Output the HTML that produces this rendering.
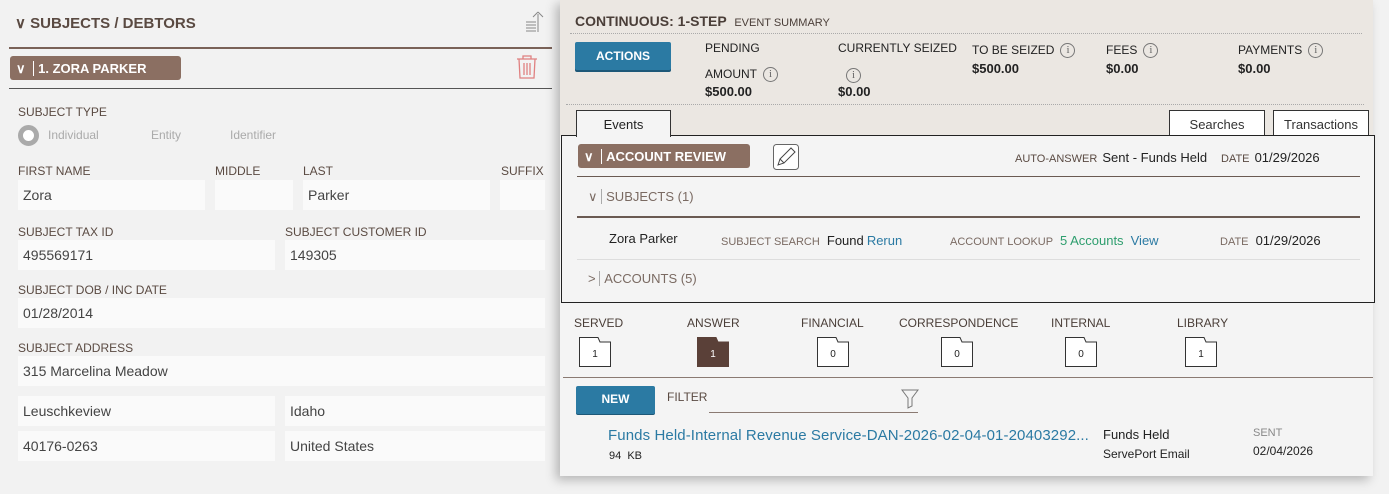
<!DOCTYPE html>
<html><head><meta charset="utf-8"><style>
*{margin:0;padding:0;box-sizing:border-box}
body{width:1389px;height:494px;background:#f2f2f2;font-family:"Liberation Sans Narrow","Liberation Sans",sans-serif;position:relative;overflow:hidden;color:#333}
.a{position:absolute;white-space:nowrap}
.lbl{font-size:12px;color:#5a4a42}
.in{position:absolute;background:#fafafa;height:30px;font-family:"Liberation Sans",sans-serif;font-size:14px;color:#444;padding:7px 5px}
.info{display:inline-block;width:15px;height:15px;border:1px solid #777;border-radius:50%;font-size:11px;text-align:center;line-height:13px;color:#666;vertical-align:middle;margin-left:6px;font-family:"Liberation Serif",serif}
.v{font-weight:bold;font-size:13px;color:#222}
.fold{position:absolute;width:32px;height:30px}
.fold span{position:absolute;left:0;width:32px;top:12px;text-align:center;font-size:10px;color:#222}
</style></head><body>
<!-- LEFT -->
<div class="a" style="left:15px;top:14px;font-size:15px;font-weight:bold;color:#5a4a42">&#8744; SUBJECTS / DEBTORS</div>
<svg class="a" style="left:524px;top:10px" width="24" height="24" viewBox="0 0 24 24"><path d="M2 12h10M2 15h10M2 18h10M2 21h10M14 22V4M14 2l-5 5M14 2l5 5" stroke="#888" fill="none" stroke-width="1"/></svg>
<div class="a" style="left:9px;top:47px;width:543px;height:2px;background:#7a6258"></div>
<div class="a" style="left:10px;top:56px;width:171px;height:24px;background:#8b6f62;border-radius:3px;color:#fff;font-size:13px;font-weight:bold;padding:5px 6px">&#8744; <span style="border-left:1px solid #fff;margin:0 4px"></span> 1. ZORA PARKER</div>
<svg class="a" style="left:515px;top:54px" width="24" height="26" viewBox="0 0 24 26"><path d="M2 5h20M8 5V2h8v3M4 5l1 19h14l1-19M9 9v12M12 9v12M15 9v12" stroke="#e08080" fill="none" stroke-width="1.3"/></svg>
<div class="a" style="left:9px;top:88px;width:543px;height:1px;background:#555"></div>
<div class="a lbl" style="left:18px;top:105px">SUBJECT TYPE</div>
<div class="a" style="left:18px;top:125px;width:21px;height:21px;border-radius:50%;border:5px solid #aaa;background:#fff"></div>
<div class="a" style="left:48px;top:128px;font-size:12px;color:#aaa;font-family:'Liberation Sans'">Individual</div>
<div class="a" style="left:151px;top:128px;font-size:12px;color:#aaa;font-family:'Liberation Sans'">Entity</div>
<div class="a" style="left:230px;top:128px;font-size:12px;color:#aaa;font-family:'Liberation Sans'">Identifier</div>
<div class="a lbl" style="left:18px;top:164px">FIRST NAME</div>
<div class="a lbl" style="left:215px;top:164px">MIDDLE</div>
<div class="a lbl" style="left:303px;top:164px">LAST</div>
<div class="a lbl" style="left:501px;top:164px">SUFFIX</div>
<div class="in" style="left:18px;top:180px;width:187px">Zora</div>
<div class="in" style="left:215px;top:180px;width:78px"></div>
<div class="in" style="left:303px;top:180px;width:187px">Parker</div>
<div class="in" style="left:500px;top:180px;width:45px"></div>
<div class="a lbl" style="left:18px;top:225px">SUBJECT TAX ID</div>
<div class="a lbl" style="left:285px;top:225px">SUBJECT CUSTOMER ID</div>
<div class="in" style="left:18px;top:240px;width:257px">495569171</div>
<div class="in" style="left:285px;top:240px;width:260px">149305</div>
<div class="a lbl" style="left:18px;top:283px">SUBJECT DOB / INC DATE</div>
<div class="in" style="left:18px;top:298px;width:527px">01/28/2014</div>
<div class="a lbl" style="left:18px;top:341px">SUBJECT ADDRESS</div>
<div class="in" style="left:18px;top:356px;width:527px">315 Marcelina Meadow</div>
<div class="in" style="left:18px;top:396px;width:257px">Leuschkeview</div>
<div class="in" style="left:285px;top:396px;width:260px">Idaho</div>
<div class="in" style="left:18px;top:431px;width:257px">40176-0263</div>
<div class="in" style="left:285px;top:431px;width:260px">United States</div>
<!-- RIGHT PANEL -->
<div class="a" style="left:560px;top:0;width:813px;height:476px;background:#f4f4f4;box-shadow:-4px 4px 10px rgba(0,0,0,.25)"></div>
<div class="a" style="left:560px;top:0;width:813px;height:136px;background:#ebe7e2"></div>
<div class="a" style="left:575px;top:13px;font-size:14px;font-weight:bold;color:#4a3e38">CONTINUOUS: 1-STEP <span style="font-size:11px;font-weight:normal;margin-left:4px">EVENT SUMMARY</span></div>
<div class="a" style="left:570px;top:33px;width:792px;border-top:1px dotted #aaa"></div>
<div class="a" style="left:575px;top:42px;width:96px;height:28px;background:#2b7aa3;color:#fff;font-weight:bold;font-size:12px;text-align:center;line-height:28px;border-radius:2px;box-shadow:0 2px 0 #1d5878">ACTIONS</div>
<div class="a" style="left:705px;top:41px;font-size:12px;color:#222">PENDING</div>
<div class="a" style="left:705px;top:67px;font-size:12px;color:#222">AMOUNT<span class="info">i</span></div>
<div class="a v" style="left:705px;top:84px">$500.00</div>
<div class="a" style="left:838px;top:41px;font-size:12px;color:#222">CURRENTLY SEIZED</div>
<div class="a" style="left:840px;top:67px"><span class="info" style="margin-left:6px">i</span></div>
<div class="a v" style="left:838px;top:84px">$0.00</div>
<div class="a" style="left:972px;top:43px;font-size:12px;color:#222">TO BE SEIZED<span class="info">i</span></div>
<div class="a v" style="left:972px;top:61px">$500.00</div>
<div class="a" style="left:1106px;top:43px;font-size:12px;color:#222">FEES<span class="info">i</span></div>
<div class="a v" style="left:1106px;top:61px">$0.00</div>
<div class="a" style="left:1238px;top:43px;font-size:12px;color:#222">PAYMENTS<span class="info">i</span></div>
<div class="a v" style="left:1238px;top:61px">$0.00</div>
<div class="a" style="left:566px;top:104px;width:798px;border-top:1px dotted #aaa"></div>
<div class="a" style="left:561px;top:135px;width:814px;height:168px;border:1px solid #222;background:#f4f4f4"></div>
<div class="a" style="left:576px;top:110px;width:95px;height:27px;background:#f4f4f4;border:1px solid #333;border-bottom:none;font-size:13px;text-align:center;padding-top:6px;color:#222">Events</div>
<div class="a" style="left:1169px;top:110px;width:96px;height:25px;background:#fff;border:1px solid #333;border-bottom:none;font-size:13px;text-align:center;padding-top:6px;color:#333">Searches</div>
<div class="a" style="left:1273px;top:110px;width:96px;height:25px;background:#fff;border:1px solid #333;border-bottom:none;font-size:13px;text-align:center;padding-top:6px;color:#333">Transactions</div>
<div class="a" style="left:578px;top:144px;width:172px;height:24px;background:#8b6f62;border-radius:3px;color:#fff;font-size:13px;font-weight:bold;padding:5px 6px">&#8744; <span style="border-left:1px solid #fff;margin:0 4px"></span> ACCOUNT REVIEW</div>
<svg class="a" style="left:773px;top:144px" width="26" height="26" viewBox="0 0 26 26"><rect x="0.5" y="0.5" width="25" height="25" rx="3" fill="#fff" stroke="#666"/><path d="M5 21l2-6 11-11 4 4-11 11zM7 15l4 4" stroke="#444" fill="none"/></svg>
<div class="a" style="left:1015px;top:150px;font-size:11px;color:#5a4a42">AUTO-ANSWER <span style="font-size:13px;color:#222;margin-left:2px">Sent - Funds Held</span></div>
<div class="a" style="left:1221px;top:150px;font-size:11px;color:#5a4a42">DATE <span style="font-size:13px;color:#222;margin-left:2px">01/29/2026</span></div>
<div class="a" style="left:577px;top:176px;width:783px;height:1px;background:#6a5a52"></div>
<div class="a" style="left:588px;top:189px;font-size:13px;color:#7a6a62">&#8744; <span style="border-left:1px solid #aaa;margin-right:4px"></span>SUBJECTS (1)</div>
<div class="a" style="left:577px;top:216px;width:783px;height:2px;background:#6a5a52"></div>
<div class="a" style="left:609px;top:231px;font-size:13px;color:#222">Zora Parker</div>
<div class="a" style="left:721px;top:233px;font-size:11px;color:#7a6a62">SUBJECT SEARCH <span style="font-size:13px;color:#222;margin-left:4px">Found</span> <span style="font-size:13px;color:#2b7aa3">Rerun</span></div>
<div class="a" style="left:950px;top:233px;font-size:11px;color:#7a6a62">ACCOUNT LOOKUP <span style="font-size:13px;color:#2e9e6e;margin-left:4px">5 Accounts</span> <span style="font-size:13px;color:#2b7aa3;margin-left:4px">View</span></div>
<div class="a" style="left:1220px;top:233px;font-size:11px;color:#7a6a62">DATE <span style="font-size:13px;color:#222;margin-left:4px">01/29/2026</span></div>
<div class="a" style="left:577px;top:259px;width:783px;height:1px;background:#ddd"></div>
<div class="a" style="left:588px;top:271px;font-size:13px;color:#7a6a62">&gt; <span style="border-left:1px solid #aaa;margin-right:4px"></span>ACCOUNTS (5)</div>
<div class="a" style="left:574px;top:316px;font-size:12px;color:#4a3e38">SERVED</div>
<div class="a" style="left:687px;top:316px;font-size:12px;color:#4a3e38">ANSWER</div>
<div class="a" style="left:801px;top:316px;font-size:12px;color:#4a3e38">FINANCIAL</div>
<div class="a" style="left:899px;top:316px;font-size:12px;color:#4a3e38">CORRESPONDENCE</div>
<div class="a" style="left:1051px;top:316px;font-size:12px;color:#4a3e38">INTERNAL</div>
<div class="a" style="left:1177px;top:316px;font-size:12px;color:#4a3e38">LIBRARY</div>
<div class="fold" style="left:579px;top:337px"><svg width="32" height="30"><path d="M0.5 29.5V0.5H19L21 5H31.5V29.5Z" fill="#fff" stroke="#333"/></svg><span>1</span></div>
<div class="fold" style="left:697px;top:337px"><svg width="32" height="30"><path d="M0.5 29.5V0.5H19L21 5H31.5V29.5Z" fill="#5a4038" stroke="#5a4038"/></svg><span style="color:#fff">1</span></div>
<div class="fold" style="left:817px;top:337px"><svg width="32" height="30"><path d="M0.5 29.5V0.5H19L21 5H31.5V29.5Z" fill="#fff" stroke="#333"/></svg><span>0</span></div>
<div class="fold" style="left:941px;top:337px"><svg width="32" height="30"><path d="M0.5 29.5V0.5H19L21 5H31.5V29.5Z" fill="#fff" stroke="#333"/></svg><span>0</span></div>
<div class="fold" style="left:1065px;top:337px"><svg width="32" height="30"><path d="M0.5 29.5V0.5H19L21 5H31.5V29.5Z" fill="#fff" stroke="#333"/></svg><span>0</span></div>
<div class="fold" style="left:1185px;top:337px"><svg width="32" height="30"><path d="M0.5 29.5V0.5H19L21 5H31.5V29.5Z" fill="#fff" stroke="#333"/></svg><span>1</span></div>
<div class="a" style="left:563px;top:377px;width:810px;height:1px;background:#8a7a72"></div>
<div class="a" style="left:576px;top:386px;width:79px;height:28px;background:#2b7aa3;color:#fff;font-weight:bold;font-size:12px;text-align:center;line-height:27px;border-radius:2px;box-shadow:0 1px 0 #1d5878">NEW</div>
<div class="a" style="left:667px;top:390px;font-size:12px;color:#5a4a42">FILTER</div>
<div class="a" style="left:709px;top:412px;width:209px;height:1px;background:#8a7a72"></div>
<svg class="a" style="left:901px;top:389px" width="18" height="20" viewBox="0 0 18 20"><path d="M1 1h16l-6 8v8l-4 2V9z" stroke="#777" fill="none"/></svg>
<div class="a" style="left:608px;top:427px;font-size:15px;color:#2b7aa3;font-family:'Liberation Sans';letter-spacing:0.1px">Funds Held-Internal Revenue Service-DAN-2026-02-04-01-20403292...</div>
<div class="a" style="left:609px;top:450px;font-size:11px;color:#222;font-family:'Liberation Sans'">94&nbsp; KB</div>
<div class="a" style="left:1103px;top:427px;font-size:13px;color:#222">Funds Held</div>
<div class="a" style="left:1103px;top:447px;font-size:12px;color:#222">ServePort Email</div>
<div class="a" style="left:1253px;top:427px;font-size:11px;color:#888">SENT</div>
<div class="a" style="left:1253px;top:444px;font-size:12px;color:#222">02/04/2026</div>
</body></html>
